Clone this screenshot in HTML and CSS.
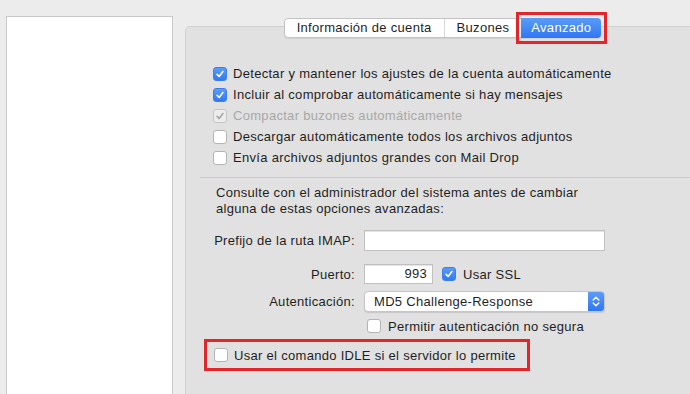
FILE: index.html
```html
<!DOCTYPE html>
<html>
<head>
    <meta http-equiv="Content-Type" content="text/html; charset=utf-8"/>
    <title>Cuentas - Avanzado</title>
    <link rel="stylesheet" href="styles.css">
</head>
<body>
<div class="window">
    <div class="sidebar"></div>

    <div class="prefs">
        <div class="tabs">
            <span class="tab">Información de cuenta</span>
            <span class="tab">Buzones</span>
            <span class="tab selected marked">Avanzado</span>
        </div>

        <ul class="options">
            <li><span class="check on"><svg viewBox="0 0 14 14"><polyline points="3.6,7.4 6,9.8 10.4,4.2"/></svg></span>Detectar y mantener los ajustes de la cuenta automáticamente</li>
            <li><span class="check on"><svg viewBox="0 0 14 14"><polyline points="3.6,7.4 6,9.8 10.4,4.2"/></svg></span>Incluir al comprobar automáticamente si hay mensajes</li>
            <li class="disabled"><span class="check dim"><svg viewBox="0 0 14 14"><polyline points="3.6,7.4 6,9.8 10.4,4.2"/></svg></span>Compactar buzones automáticamente</li>
            <li><span class="check"></span>Descargar automáticamente todos los archivos adjuntos</li>
            <li><span class="check"></span>Envía archivos adjuntos grandes con Mail Drop</li>
        </ul>

        <div class="divider"></div>

        <p class="note">Consulte con el administrador del sistema antes de cambiar<br>alguna de estas opciones avanzadas:</p>

        <div class="form">
            <div class="row row-imap">
                <label>Prefijo de la ruta IMAP:</label>
                <span class="input wide"></span>
            </div>
            <div class="row row-port">
                <label>Puerto:</label>
                <span class="input port">993</span>
                <span class="check on"><svg viewBox="0 0 14 14"><polyline points="3.6,7.4 6,9.8 10.4,4.2"/></svg></span>
                <span class="check-label">Usar SSL</span>
            </div>
            <div class="row row-auth">
                <label>Autenticación:</label>
                <span class="select">
                    <span class="select-text">MD5 Challenge-Response</span>
                    <span class="stepper"><svg viewBox="0 0 16 19"><polyline points="5.2,8 8,5.2 10.8,8"/><polyline points="5.2,11 8,13.8 10.8,11"/></svg></span>
                </span>
            </div>
            <div class="row row-insecure">
                <label></label>
                <span class="check"></span>
                <span class="check-label">Permitir autenticación no segura</span>
            </div>
        </div>

        <div class="idle marked-box">
            <span class="check"></span>Usar el comando IDLE si el servidor lo permite
        </div>
    </div>
</div>
</body>
</html>
```

FILE: styles.css
```css
* {
    box-sizing: border-box;
}

html, body {
    margin: 0;
    height: 394px;
    overflow: hidden;
}

body {
    background: #ececec;
    font-family: "Liberation Sans", Arial, sans-serif;
    font-size: 13px;
    letter-spacing: 0.3px;
    color: #1f1f1f;
}

.window {
    display: flex;
    align-items: flex-start;
}

/* account list */
.sidebar {
    flex: none;
    width: 167px;
    height: 378px;
    margin: 16px 0 0 6px;
    background: #fff;
    border: 1px solid #c9c9c9;
    border-bottom: none;
}

/* settings box */
.prefs {
    flex: none;
    width: 515px;
    height: 368px;
    margin: 26px 0 0 12px;
    background: #e1e1e1;
    border: 1px solid #d0d0d0;
    border-bottom: none;
    border-radius: 5px 0 0 0;
}

.tabs {
    display: flex;
    width: fit-content;
    height: 20px;
    margin: -9px auto 0;
    background: #fff;
    border: 1px solid #c3c3c3;
    border-radius: 4px;
    box-shadow: 0 1px 1px rgba(0, 0, 0, 0.08);
}

.tab {
    display: flex;
    align-items: center;
    padding: 0 12px;
    border-left: 1px solid #d8d8d8;
    line-height: 18px;
}

.tab:first-child {
    border-left: none;
}

.tab.selected {
    padding: 0 10px;
    margin: -1px -1px -1px 0;
    background: linear-gradient(#5b9cf8, #2f77f2);
    color: #fff;
    border-left: none;
    border-radius: 0 4px 4px 0;
}

/* red annotation frames */
.marked {
    position: relative;
}

.marked::after {
    content: "";
    position: absolute;
    top: -6px;
    right: -6px;
    bottom: -6px;
    left: -5px;
    border: 3px solid #e3262b;
}

.marked-box {
    border: 3px solid #e3262b;
}

/* checkboxes */
.options {
    list-style: none;
    margin: 25px 0 0;
    padding: 0 0 0 27px;
}

.options li {
    display: flex;
    align-items: center;
    height: 21px;
}

.options li.disabled {
    color: #a8a8a8;
}

.check {
    flex: none;
    display: inline-flex;
    width: 14px;
    height: 14px;
    margin-right: 6px;
    background: #fff;
    border: 1px solid #b4b4b4;
    border-radius: 3px;
}

.check svg {
    width: 12px;
    height: 12px;
    fill: none;
    stroke: #fff;
    stroke-width: 1.8;
    stroke-linecap: round;
    stroke-linejoin: round;
}

.check.on {
    background: linear-gradient(#5c9cf8, #3079f3);
    border-color: #3a7ef0;
}

.check.dim {
    background: #ececec;
    border-color: #c4c4c4;
}

.check.dim svg {
    stroke: #a4a4a4;
}

.divider {
    height: 1px;
    margin: 9px 0 0 14px;
    background: #cbcbcb;
}

.note {
    margin: 7px 0 0 30px;
    line-height: 16px;
}

/* server fields */
.form {
    margin: 13px 0 0 31px;
}

.row {
    display: flex;
    align-items: center;
}

.row label {
    flex: none;
    display: flex;
    justify-content: flex-end;
    width: 138px;
    margin-right: 9px;
    white-space: nowrap;
}

.row-imap {
    height: 21px;
}

.row-port {
    height: 20px;
    margin-top: 13px;
}

.row-auth {
    height: 21px;
    margin-top: 7px;
}

.row-insecure {
    height: 20px;
    margin-top: 4px;
}

.row-insecure .check {
    margin-left: 3px;
}

.check-label {
    margin-left: 1px;
}

.input {
    height: 100%;
    background: #fff;
    border: 1px solid #c0c0c0;
    box-shadow: inset 0 1px 0 #e4e4e4;
}

.input.wide {
    width: 241px;
}

.input.port {
    width: 69px;
    margin-right: 9px;
    padding: 0 5px;
    line-height: 18px;
    text-align: right;
}

.select {
    display: flex;
    width: 241px;
    height: 100%;
    background: #fff;
    border: 1px solid #c6c6c6;
    border-radius: 4px;
    box-shadow: 0 1px 1px rgba(0, 0, 0, 0.12);
    overflow: hidden;
}

.select-text {
    flex: 1;
    padding-left: 9px;
    line-height: 19px;
}

.stepper {
    width: 16px;
    background: linear-gradient(#5c9cf8, #2f77f2);
}

.stepper svg {
    display: block;
    width: 16px;
    height: 19px;
    fill: none;
    stroke: #fff;
    stroke-width: 1.4;
    stroke-linecap: round;
    stroke-linejoin: round;
}

/* IDLE option */
.idle {
    display: flex;
    align-items: center;
    width: 326px;
    height: 32px;
    margin: 3px 0 0 18px;
    padding-left: 7px;
}
```
